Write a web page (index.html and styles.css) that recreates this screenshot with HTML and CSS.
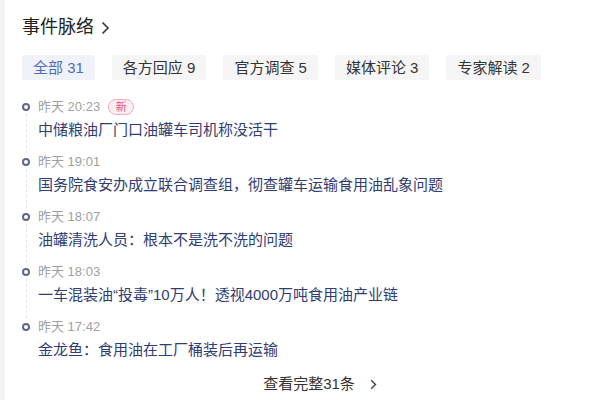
FILE: index.html
```html
<!DOCTYPE html>
<html lang="zh">
<head>
<meta charset="utf-8">
<link rel="stylesheet" href="styles.css">
</head>
<body>
<div class="page">
  <div class="strip"></div>
  <div class="panel">
    <div class="head">
      <span class="head-title">事件脉络</span>
      <svg class="head-chev" width="9" height="14" viewBox="0 0 9 14"><path d="M1.5 1.5 L7 7 L1.5 12.5" fill="none" stroke="#333" stroke-width="1.6"/></svg>
    </div>
    <div class="tabs">
      <span class="tab active">全部 31</span>
      <span class="tab">各方回应 9</span>
      <span class="tab">官方调查 5</span>
      <span class="tab">媒体评论 3</span>
      <span class="tab">专家解读 2</span>
    </div>
    <ul class="timeline">
      <li class="item">
        <div class="rail"><span class="dot"></span><span class="line"></span></div>
        <div class="body">
          <div class="time">昨天 20:23 <span class="badge">新</span></div>
          <div class="title">中储粮油厂门口油罐车司机称没活干</div>
        </div>
      </li>
      <li class="item">
        <div class="rail"><span class="dot"></span><span class="line"></span></div>
        <div class="body">
          <div class="time">昨天 19:01</div>
          <div class="title">国务院食安办成立联合调查组，彻查罐车运输食用油乱象问题</div>
        </div>
      </li>
      <li class="item">
        <div class="rail"><span class="dot"></span><span class="line"></span></div>
        <div class="body">
          <div class="time">昨天 18:07</div>
          <div class="title">油罐清洗人员：根本不是洗不洗的问题</div>
        </div>
      </li>
      <li class="item">
        <div class="rail"><span class="dot"></span><span class="line"></span></div>
        <div class="body">
          <div class="time">昨天 18:03</div>
          <div class="title">一车混装油“投毒”10万人！透视4000万吨食用油产业链</div>
        </div>
      </li>
      <li class="item last">
        <div class="rail"><span class="dot"></span></div>
        <div class="body">
          <div class="time">昨天 17:42</div>
          <div class="title">金龙鱼：食用油在工厂桶装后再运输</div>
        </div>
      </li>
    </ul>
    <div class="more">
      <span class="more-text">查看完整31条</span>
      <svg class="more-chev" width="7" height="11" viewBox="0 0 7 11"><path d="M1.2 1.2 L5.5 5.5 L1.2 9.8" fill="none" stroke="#444" stroke-width="1.4"/></svg>
    </div>
  </div>
</div>
</body>
</html>
```
FILE: styles.css
```css
* { box-sizing: border-box; }
html, body { margin: 0; padding: 0; background: #fff; }
body {
  font-family: "Liberation Sans", "Noto Sans CJK SC", sans-serif;
  color: #222;
}
.page {
  display: flex;
  width: 612px;
  height: 400px;
  overflow: hidden;
}
.strip {
  width: 5px;
  flex: none;
  background: #f3f3f3;
}
.panel {
  flex: 1;
  padding: 14px 0 0 17px;
  display: flex;
  flex-direction: column;
}
.head {
  display: flex;
  align-items: center;
  height: 26px;
  gap: 7px;
}
.head-title {
  font-size: 18px;
  color: #222;
  line-height: 26px;
}
.head-chev { margin-top: 1px; }
.tabs {
  display: flex;
  gap: 17px;
  margin-top: 15px;
}
.tab {
  height: 25px;
  line-height: 25px;
  padding: 0 11px;
  font-size: 15px;
  background: #f5f5f5;
  color: #333;
  border-radius: 2px;
}
.tab.active {
  background: #eff2f8;
  color: #4f6bb3;
}
.timeline {
  list-style: none;
  margin: 18px 0 0 0;
  padding: 0;
}
.item {
  display: flex;
  height: 55px;
}
.rail {
  width: 8px;
  flex: none;
  display: flex;
  flex-direction: column;
  align-items: center;
  padding-top: 5px;
  margin-right: 8px;
}
.dot {
  width: 8px;
  height: 8px;
  border: 2px solid #5f6688;
  border-radius: 50%;
  flex: none;
}
.line {
  flex: 1;
  width: 0;
  border-left: 1px dashed #e6e6e6;
  margin-top: 3px;
}
.time {
  height: 18px;
  line-height: 18px;
  font-size: 13px;
  color: #a0a0a0;
  display: flex;
  align-items: center;
}
.badge {
  display: inline-block;
  margin-left: 8px;
  width: 26px;
  height: 16px;
  line-height: 14px;
  text-align: center;
  font-size: 11px;
  color: #e0557a;
  background: #fdf0f3;
  border: 1px solid #f2a9bb;
  border-radius: 8px;
}
.title {
  margin-top: 2px;
  height: 24px;
  line-height: 24px;
  font-size: 15px;
  color: #2f3d73;
  white-space: nowrap;
}
.more {
  display: flex;
  justify-content: center;
  align-items: center;
  gap: 15px;
  height: 22px;
  padding-left: 6px;
}
.more-text {
  font-size: 15px;
  color: #333;
  line-height: 22px;
}
```
